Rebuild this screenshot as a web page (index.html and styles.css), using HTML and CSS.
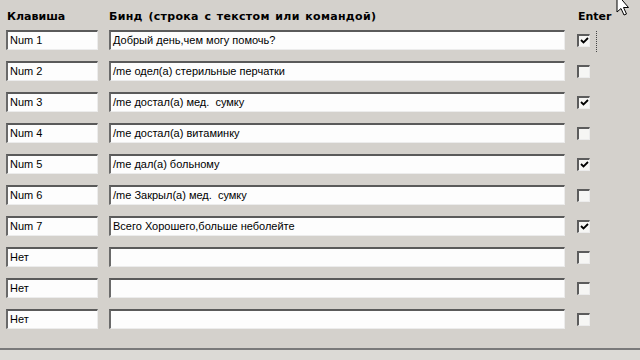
FILE: index.html
```html
<!DOCTYPE html>
<html>
<head>
  <meta charset="utf-8">
  <title>Бинды</title>
  <link rel="stylesheet" href="styles.css">
</head>
<body>
  <div class="panel">
    <div class="head">
      <div class="h-key">Клавиша</div>
      <div class="h-bind">Бинд (строка с текстом или командой)</div>
      <div class="h-enter">Enter</div>
    </div>

    <div class="rows">
      <div class="row">
        <div class="field">Num 1</div>
        <div class="field">Добрый день,чем могу помочь?</div>
        <div class="check on focus"><svg viewBox="0 0 9 9"><path d="M1 4 L3.5 6.5 L8 2"/></svg></div>
      </div>
      <div class="row">
        <div class="field">Num 2</div>
        <div class="field">/me одел(а) стерильные перчатки</div>
        <div class="check"></div>
      </div>
      <div class="row">
        <div class="field">Num 3</div>
        <div class="field">/me достал(а) мед.&nbsp; сумку</div>
        <div class="check on"><svg viewBox="0 0 9 9"><path d="M1 4 L3.5 6.5 L8 2"/></svg></div>
      </div>
      <div class="row">
        <div class="field">Num 4</div>
        <div class="field">/me достал(а) витаминку</div>
        <div class="check"></div>
      </div>
      <div class="row">
        <div class="field">Num 5</div>
        <div class="field">/me дал(а) больному</div>
        <div class="check on"><svg viewBox="0 0 9 9"><path d="M1 4 L3.5 6.5 L8 2"/></svg></div>
      </div>
      <div class="row">
        <div class="field">Num 6</div>
        <div class="field">/me Закрыл(а) мед.&nbsp; сумку</div>
        <div class="check"></div>
      </div>
      <div class="row">
        <div class="field">Num 7</div>
        <div class="field">Всего Хорошего,больше неболейте</div>
        <div class="check on"><svg viewBox="0 0 9 9"><path d="M1 4 L3.5 6.5 L8 2"/></svg></div>
      </div>
      <div class="row">
        <div class="field">Нет</div>
        <div class="field"></div>
        <div class="check"></div>
      </div>
      <div class="row">
        <div class="field">Нет</div>
        <div class="field"></div>
        <div class="check"></div>
      </div>
      <div class="row">
        <div class="field">Нет</div>
        <div class="field"></div>
        <div class="check"></div>
      </div>
    </div>
  </div>

  <div class="statusbar"></div>

  <svg class="cursor" viewBox="0 0 16 24" width="16" height="24">
    <path d="M1 -6 L1 12 L5 8.5 L8 15 L10.5 14 L7.5 7.5 L12.5 7.5 Z"/>
  </svg>
</body>
</html>
```

FILE: styles.css
```css
* {
  box-sizing: border-box;
}

html, body {
  margin: 0;
  padding: 0;
  height: 100%;
  overflow: hidden;
}

body {
  background: #d4d1cc;
  font-family: "Liberation Sans", Arial, sans-serif;
  font-size: 11px;
  color: #000;
  position: relative;
}

.panel {
  padding: 0 6px;
  height: 348px;
}

.head,
.row {
  display: grid;
  grid-template-columns: 92px 456px 13px;
  column-gap: 11px;
}

.head {
  height: 30px;
  align-items: center;
  padding-top: 3px;
  font-family: "DejaVu Sans", Verdana, sans-serif;
  font-weight: bold;
  font-size: 11px;
}

.h-key {
  padding-left: 1px;
}

.h-bind {
  letter-spacing: 0.3px;
  word-spacing: 1.5px;
  white-space: nowrap;
}

.h-enter {
  white-space: nowrap;
  padding-left: 2px;
}

.rows {
  display: flex;
  flex-direction: column;
  gap: 11px;
}

.row {
  height: 20px;
  align-items: center;
}

.field {
  height: 20px;
  line-height: 17px;
  padding-left: 2px;
  background: #fdfdfd;
  border-top: 2px solid #5a5a5a;
  border-left: 2px solid #6a6a6a;
  border-right: 1px solid #ececec;
  border-bottom: 1px solid #ececec;
  white-space: nowrap;
  overflow: hidden;
}

.check {
  position: relative;
  width: 13px;
  height: 13px;
  margin-left: 1px;
  background: #f6f6f4;
  border-top: 2px solid #5c5c5c;
  border-left: 2px solid #5c5c5c;
  border-right: 1px solid #ececec;
  border-bottom: 1px solid #ececec;
}

.check svg {
  display: block;
  width: 9px;
  height: 9px;
  margin: 0.5px 0 0 0.5px;
}

.check svg path {
  fill: none;
  stroke: #000;
  stroke-width: 1.8;
}

.check.focus::after {
  content: "";
  position: absolute;
  left: 17px;
  top: -5px;
  height: 21px;
  border-right: 1px dotted #444;
}

.statusbar {
  height: 12px;
  border-top: 2px solid #7a7a7a;
  background: #dcdad6;
}

.cursor {
  position: absolute;
  left: 616px;
  top: 0;
}

.cursor path {
  fill: #fff;
  stroke: #000;
  stroke-width: 1;
}
```
